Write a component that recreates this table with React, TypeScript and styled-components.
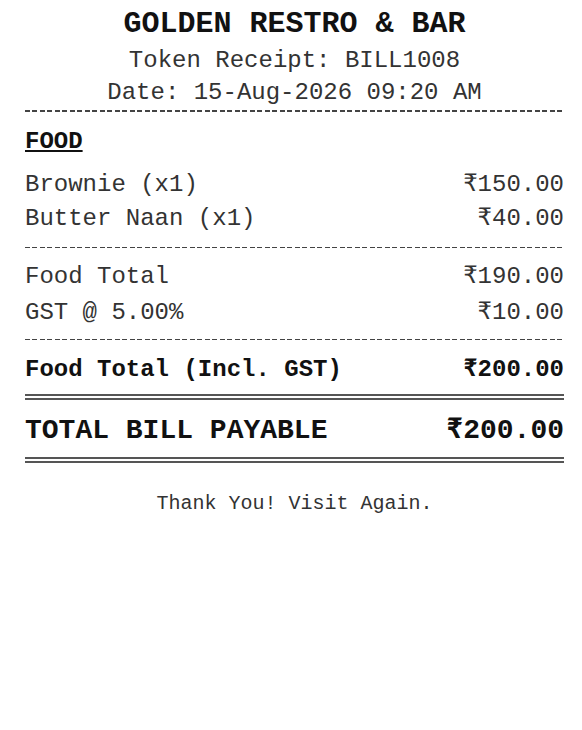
import React from "react";
import styled, { createGlobalStyle } from "styled-components";

const Global = createGlobalStyle`
  html, body { margin: 0; padding: 0; background: #ffffff; }
  body { font-family: "Liberation Mono", "Courier New", monospace; color: #333; }
`;

const Receipt = styled.div`
  width: 539px;
  margin: 0 0 0 25px;
  padding-top: 8px;
  display: flex;
  flex-direction: column;
`;

const Title = styled.div`
  font-size: 30px;
  font-weight: 700;
  line-height: 32px;
  text-align: center;
  color: #111;
`;

const HeaderLine = styled.div<{ $mt?: number }>`
  font-size: 24px;
  line-height: 28px;
  padding-top: 4px;
  text-align: center;
  margin-top: ${(p) => p.$mt ?? 0}px;
`;

const Dashed = styled.div<{ $mt: number; $mb: number }>`
  height: 1.5px;
  background: repeating-linear-gradient(to right, #444 0 5px, transparent 5px 7.5px);
  margin-top: ${(p) => p.$mt}px;
  margin-bottom: ${(p) => p.$mb}px;
`;

const Double = styled.div<{ $mt: number; $mb: number }>`
  border-top: 6px double #555;
  margin-top: ${(p) => p.$mt}px;
  margin-bottom: ${(p) => p.$mb}px;
`;

const Section = styled.div`
  font-size: 24px;
  line-height: 28px;
  padding-top: 4px;
  font-weight: 700;
  text-decoration: underline;
  color: #111;
  margin-bottom: 11px;
`;

const Row = styled.div<{ $mt?: number; $bold?: boolean; $big?: boolean }>`
  display: flex;
  justify-content: space-between;
  align-items: center;
  font-size: ${(p) => (p.$big ? 28 : 24)}px;
  line-height: ${(p) => (p.$big ? 30 : 28)}px;
  padding-top: 4px;
  font-weight: ${(p) => (p.$bold ? 700 : 400)};
  color: ${(p) => (p.$bold ? "#111" : "#333")};
  margin-top: ${(p) => p.$mt ?? 0}px;
`;

const Thanks = styled.div`
  font-size: 20px;
  line-height: 24px;
  padding-top: 4px;
  text-align: center;
  margin-top: 25px;
`;

export default function App() {
  return (
    <>
      <Global />
      <Receipt>
        <Title>GOLDEN RESTRO &amp; BAR</Title>
        <HeaderLine $mt={3}>Token Receipt: BILL1008</HeaderLine>
        <HeaderLine>Date: 15-Aug-2026 09:20 AM</HeaderLine>
        <Dashed $mt={3} $mb={12.5} />
        <Section>FOOD</Section>
        <Row>
          <span>Brownie (x1)</span>
          <span>₹150.00</span>
        </Row>
        <Row $mt={2}>
          <span>Butter Naan (x1)</span>
          <span>₹40.00</span>
        </Row>
        <Dashed $mt={13.5} $mb={11} />
        <Row>
          <span>Food Total</span>
          <span>₹190.00</span>
        </Row>
        <Row $mt={4}>
          <span>GST @ 5.00%</span>
          <span>₹10.00</span>
        </Row>
        <Dashed $mt={11.5} $mb={12} />
        <Row $bold>
          <span>Food Total (Incl. GST)</span>
          <span>₹200.00</span>
        </Row>
        <Double $mt={10} $mb={12} />
        <Row $bold $big>
          <span>TOTAL BILL PAYABLE</span>
          <span>₹200.00</span>
        </Row>
        <Double $mt={11} $mb={0} />
        <Thanks>Thank You! Visit Again.</Thanks>
      </Receipt>
    </>
  );
}
